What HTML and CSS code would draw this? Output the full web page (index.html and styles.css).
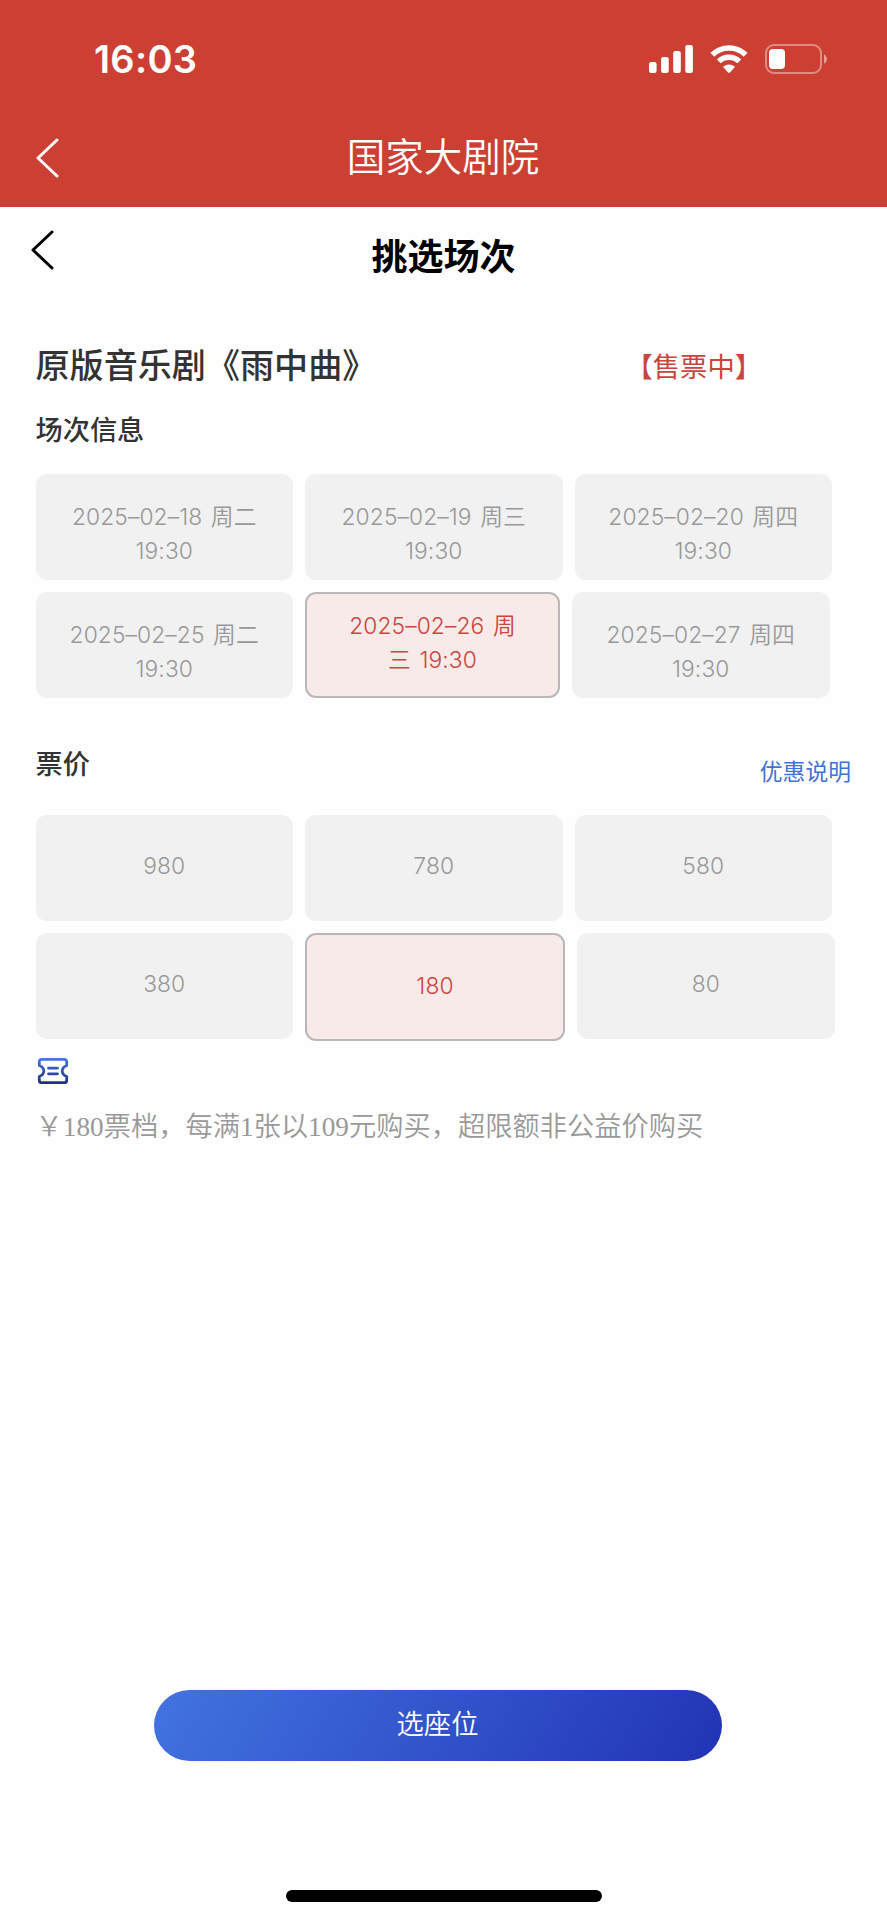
FILE: index.html
```html
<!DOCTYPE html>
<html lang="zh-CN">
<head>
    <meta charset="UTF-8">
    <meta name="viewport" content="width=device-width, initial-scale=1.0">
    <title>挑选场次</title>
    <link rel="stylesheet" href="styles.css">
</head>
<body>
    <header class="app-header">
        <div class="status-bar">
            <span class="time">16:03</span>
            <div class="status-icons">
                <svg class="signal" width="44" height="28" viewBox="0 0 44 28" fill="#fff">
                    <rect x="0" y="17" width="7.6" height="11" rx="2.2"/>
                    <rect x="12.1" y="12" width="7.6" height="16" rx="2.2"/>
                    <rect x="24.2" y="6" width="7.6" height="22" rx="2.2"/>
                    <rect x="36.3" y="0" width="7.6" height="28" rx="2.2"/>
                </svg>
                <svg class="wifi" width="38" height="28" viewBox="0 0 38 28">
                    <path d="M2.3 9.8 A24 24 0 0 1 35.7 9.8" fill="none" stroke="#fff" stroke-width="5.6"/>
                    <path d="M8.7 16.4 A14.8 14.8 0 0 1 29.3 16.4" fill="none" stroke="#fff" stroke-width="5.4"/>
                    <path d="M13 21.8 Q19 17 25 21.8 L20 27.4 Q19 28.2 18 27.4 Z" fill="#fff"/>
                </svg>
                <svg class="battery" width="63" height="30" viewBox="0 0 63 30">
                    <rect x="1" y="1" width="55" height="28" rx="8" fill="none" stroke="#fff" stroke-opacity=".4" stroke-width="2"/>
                    <rect x="4" y="5" width="16" height="20" rx="4" fill="#fff"/>
                    <path d="M59 10.3 Q62 12 62 15 Q62 18 59 19.7 Z" fill="#fff" fill-opacity=".5"/>
                </svg>
            </div>
        </div>
        <div class="app-bar">
            <svg class="back" width="24" height="42" viewBox="0 0 24 42">
                <path d="M22 3 L3 21 L22 39" />
            </svg>
            <h1>国家大剧院</h1>
        </div>
    </header>

    <div class="page-bar">
        <svg class="back" width="24" height="42" viewBox="0 0 24 42">
            <path d="M22 3 L3 21 L22 39" />
        </svg>
        <h2>挑选场次</h2>
    </div>

    <main class="container">
        <div class="show">
            <span class="show-name">原版音乐剧《雨中曲》</span>
            <span class="show-state">【售票中】</span>
        </div>

        <h3 class="section-title">场次信息</h3>
        <div class="options sessions">
            <div class="row">
                <div class="option">2025–02–18 周二<br>19:30</div>
                <div class="option">2025–02–19 周三<br>19:30</div>
                <div class="option">2025–02–20 周四<br>19:30</div>
            </div>
            <div class="row">
                <div class="option">2025–02–25 周二<br>19:30</div>
                <div class="option active">2025–02–26 周<br>三 19:30</div>
                <div class="option">2025–02–27 周四<br>19:30</div>
            </div>
        </div>

        <div class="price-head">
            <h3 class="section-title">票价</h3>
            <a class="discount">优惠说明</a>
        </div>
        <div class="options prices">
            <div class="row">
                <div class="option">980</div>
                <div class="option">780</div>
                <div class="option">580</div>
            </div>
            <div class="row">
                <div class="option">380</div>
                <div class="option active">180</div>
                <div class="option">80</div>
            </div>
        </div>

        <svg class="ticket" width="32" height="28" viewBox="0 0 32 28">
            <defs>
                <linearGradient id="ticketBlue" gradientUnits="userSpaceOnUse" x1="0" y1="0" x2="0" y2="28">
                    <stop offset="0" stop-color="#4a7ce0"/>
                    <stop offset="1" stop-color="#1c2a80"/>
                </linearGradient>
            </defs>
            <g fill="none" stroke="url(#ticketBlue)" stroke-width="2.8" stroke-linecap="round" stroke-linejoin="round">
                <path d="M4.8 2.3 H27.2 Q29.7 2.3 29.7 4.8 V8.5 Q25.2 10.3 25.2 14 Q25.2 17.7 29.7 19.5 V23.2 Q29.7 25.7 27.2 25.7 H4.8 Q2.3 25.7 2.3 23.2 V19.5 Q6.8 17.7 6.8 14 Q6.8 10.3 2.3 8.5 V4.8 Q2.3 2.3 4.8 2.3 Z"/>
                <path d="M11.5 11.2 H20.5 M11.5 16.8 H20.5"/>
            </g>
        </svg>
        <p class="note">￥180票档，每满1张以109元购买，超限额非公益价购买</p>
    </main>

    <footer>
        <button class="choose-seat">选座位</button>
        <div class="home-indicator"></div>
    </footer>
</body>
</html>
```
FILE: styles.css
```css
* {
    box-sizing: border-box;
}

body {
    margin: 0;
    height: 1920px;
    font-family: Inter, 'Noto Sans CJK SC', sans-serif;
    background-color: #fefefe;
    color: #333;
    display: flex;
    flex-direction: column;
}

h1, h2, h3, p {
    margin: 0;
}

svg {
    display: block;
}

.app-header {
    height: 207px;
    background-color: #cc4033;
    color: #fff;
}

.status-bar {
    height: 118px;
    display: flex;
    justify-content: space-between;
    align-items: center;
    padding: 0 59px 0 94px;
}

.time {
    font-size: 38px;
    font-weight: 600;
    line-height: 46px;
    letter-spacing: 0.3px;
}

.status-icons {
    display: flex;
    align-items: center;
    gap: 17px;
}

.app-bar,
.page-bar {
    display: flex;
    align-items: center;
}

.app-bar {
    height: 80px;
    padding-left: 35px;
}

.back {
    fill: none;
    stroke: currentColor;
    stroke-width: 3;
    stroke-linecap: round;
    stroke-linejoin: round;
}

.app-bar h1 {
    flex: 1;
    padding: 0 60px 8px 0;
    text-align: center;
    font-size: 38.5px;
    font-weight: 350;
}

.page-bar {
    height: 86px;
    padding-left: 30px;
    color: #000;
}

.page-bar h2 {
    flex: 1;
    padding: 7px 54px 0 0;
    text-align: center;
    font-size: 36px;
    font-weight: 700;
}

.container {
    flex: 1;
    padding: 48px 36px 0 35.5px;
}

.show {
    display: flex;
    height: 50px;
    line-height: 50px;
}

.show-name {
    width: 590px;
    font-size: 34.1px;
    font-weight: 500;
}

.show-state {
    font-size: 27.3px;
    line-height: 54px;
    color: #c9453c;
}

.section-title {
    font-size: 27.2px;
    font-weight: 500;
    line-height: 40px;
}

.show + .section-title {
    margin-top: 20px;
}

.options {
    display: flex;
    flex-direction: column;
    gap: 12px;
}

.sessions {
    margin-top: 23px;
}

.row {
    display: flex;
    gap: 12px;
    height: 106px;
}

.option {
    width: 257.5px;
    height: 106px;
    padding-top: 26px;
    border-radius: 11px;
    background-color: #f1f1f1;
    color: #999;
    font-size: 22.8px;
    font-weight: 350;
    line-height: 34.3px;
    letter-spacing: 0.1px;
    word-spacing: 2px;
    text-align: center;
}

.option.active {
    background-color: #f9eaea;
    border: 2px solid #b9b7b7;
    color: #cc453c;
}

.sessions .active {
    width: 255px;
    padding-top: 15px;
}

.prices .option {
    padding-top: 34px;
}

.prices .active {
    width: 260px;
    height: 108px;
}

.price-head {
    display: flex;
    justify-content: space-between;
    margin-top: 47px;
}

.discount {
    margin-top: 7px;
    font-size: 22.8px;
    line-height: 40px;
    color: #4272d4;
}

.prices {
    margin-top: 23px;
}

.ticket {
    margin: 18px 0 0 1.5px;
}

.note {
    margin-top: 22px;
    font-family: 'Liberation Serif', 'Noto Sans CJK SC', serif;
    font-size: 27.25px;
    font-weight: 350;
    line-height: 40px;
    color: #999;
}

footer {
    display: flex;
    flex-direction: column;
    height: 230px;
}

.choose-seat {
    width: 568px;
    height: 71px;
    margin-left: 154px;
    border: none;
    border-radius: 36px;
    background: linear-gradient(120deg, #4274e0, #2233b6);
    color: #fff;
    font-family: inherit;
    font-size: 27.3px;
    font-weight: 350;
    padding: 0 1px 7px 0;
}

.home-indicator {
    width: 316px;
    height: 12px;
    margin: 129px auto 0;
    border-radius: 6px;
    background-color: #000;
}
```
